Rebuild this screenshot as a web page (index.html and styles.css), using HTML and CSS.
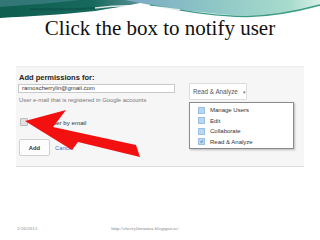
FILE: index.html
```html
<!DOCTYPE html>
<html>
<head>
<meta charset="utf-8">
<link rel="stylesheet" href="styles.css">
</head>
<body>
<div class="slide">
  <svg class="swoosh" width="320" height="20" viewBox="0 0 320 20">
    <defs>
      <linearGradient id="gl" x1="0" y1="0" x2="1" y2="0">
        <stop offset="0" stop-color="#0e5d4f"/>
        <stop offset="0.6" stop-color="#17695d"/>
        <stop offset="1" stop-color="#6a9fa3"/>
      </linearGradient>
      <linearGradient id="gr" x1="0" y1="0" x2="1" y2="0">
        <stop offset="0" stop-color="#7aa9c4"/>
        <stop offset="0.45" stop-color="#8ec6c6"/>
        <stop offset="0.85" stop-color="#a9dccd"/>
        <stop offset="1" stop-color="#d8efe6"/>
      </linearGradient>
    </defs>
    <path d="M0 0 H155 C135 4 115 8 95 11 C60 15 30 16 0 18 Z" fill="url(#gl)"/>
    <path d="M0 0 H80 C55 3 25 5 0 7 Z" fill="#4a8790" opacity="0.6"/>
    <path d="M30 9 C60 10 90 9 120 6" fill="none" stroke="#0a4a40" stroke-width="2" opacity="0.5"/>
    <path d="M125 0 H320 V6 C305 10 290 13 270 15 C250 17 225 15 200 12 C180 10 155 6 125 0 Z" fill="url(#gr)"/>
    <path d="M150 5 C180 10 215 17 248 16.5 C275 16 298 11 320 5" fill="none" stroke="#3b9a83" stroke-width="1.3"/>
    <path d="M95 8 C125 4 150 5 180 10" fill="none" stroke="#ffffff" stroke-width="1.6" opacity="0.85"/>
  </svg>
  <h1 class="title">Click the box to notify user</h1>
  <div class="panel">
    <div class="left">
      <div class="heading">Add permissions for:</div>
      <div class="input">ramoscherrylin@gmail.com</div>
      <div class="help">User e-mail that is registered in Google accounts</div>
      <div class="notify"><span class="cb"></span><span>Notify user by email</span></div>
      <div class="actions"><span class="btn">Add</span><span class="cancel">Cancel</span></div>
    </div>
    <div class="right">
      <div class="dropbtn">Read &amp; Analyze <span class="caret">▾</span></div>
      <div class="menu">
        <div class="item"><span class="mcb"></span>Manage Users</div>
        <div class="item"><span class="mcb"></span>Edit</div>
        <div class="item"><span class="mcb"></span>Collaborate</div>
        <div class="item"><span class="mcb checked">✔</span>Read &amp; Analyze</div>
      </div>
    </div>
    <svg class="arrow" width="320" height="240" viewBox="0 0 320 240">
      <polygon points="25,121 66,110 53,127 136,145 140,157 78,142 72,150" fill="#f21010"/>
    </svg>
  </div>
  <div class="footer">
    <span class="date">2/26/2013</span>
    <span class="url">http://cherrylinramos.blogspot.ae/</span>
  </div>
</div>
</body>
</html>
```
FILE: styles.css
```css
html, body {
  margin: 0;
  padding: 0;
  background: #ffffff;
}
.slide {
  width: 320px;
  height: 240px;
  position: relative;
  overflow: hidden;
  display: flex;
  flex-direction: column;
}
.swoosh {
  display: block;
  flex: none;
}
.title {
  margin: 0;
  font-family: "Liberation Serif", serif;
  font-weight: normal;
  font-size: 21px;
  line-height: 22px;
  color: #111;
  text-align: center;
  height: 22px;
  margin-top: -3px;
}
.panel {
  margin-top: 27px;
  margin-left: 16px;
  width: 288px;
  height: 99px;
  background: #f6f6f6;
  border-top: 1px solid #ececec;
  border-bottom: 1px solid #dedede;
  display: flex;
  font-family: "Liberation Sans", Arial, sans-serif;
  flex: none;
}
.left {
  width: 160px;
  padding-left: 2px;
  display: flex;
  flex-direction: column;
}
.heading {
  font-weight: bold;
  font-size: 7.5px;
  line-height: 8px;
  color: #222;
  margin-top: 7px;
  padding-left: 1px;
}
.input {
  margin-top: 2px;
  width: 152px;
  height: 7px;
  border: 1px solid #c9c9c9;
  background: #fff;
  font-size: 6px;
  line-height: 7px;
  color: #333;
  padding-left: 3px;
}
.help {
  margin-top: 4px;
  font-size: 5.9px;
  line-height: 7px;
  color: #777;
  padding-left: 1px;
}
.notify {
  margin-top: 14px;
  display: flex;
  align-items: center;
  gap: 4px;
  font-size: 6.2px;
  line-height: 7px;
  color: #333;
  padding-left: 2px;
}
.cb {
  width: 6px;
  height: 6px;
  background: #e0e0e0;
  border: 1px solid #bbb;
  border-radius: 1px;
}
.actions {
  margin-top: 13px;
  display: flex;
  align-items: center;
  gap: 5px;
  padding-left: 1px;
}
.btn {
  width: 29px;
  height: 15px;
  border: 1px solid #d0d0d0;
  border-radius: 2px;
  background: #fdfdfd;
  font-size: 5.8px;
  font-weight: bold;
  color: #333;
  display: flex;
  align-items: center;
  justify-content: center;
}
.cancel {
  font-size: 5.8px;
  color: #3a6fd0;
}
.right {
  padding-left: 11px;
  padding-top: 16px;
  display: flex;
  flex-direction: column;
}
.dropbtn {
  width: 58px;
  height: 17px;
  border: 1px solid #dcdcdc;
  border-radius: 1px;
  background: #fff;
  font-size: 6.3px;
  color: #555;
  display: flex;
  align-items: center;
  padding-left: 3px;
  box-sizing: border-box;
  gap: 5px;
}
.caret {
  font-size: 5px;
  color: #777;
}
.menu {
  margin-top: 2px;
  width: 105px;
  height: 47px;
  box-sizing: border-box;
  border: 1px solid #8a8a8a;
  background: #fff;
  box-shadow: 1px 1px 2px rgba(0,0,0,0.25);
  padding-top: 2px;
  padding-left: 8px;
}
.item {
  display: flex;
  align-items: center;
  gap: 5px;
  height: 10.5px;
  font-size: 6px;
  color: #333;
}
.mcb {
  width: 5px;
  height: 5px;
  background: #b8d6f0;
  border: 1px solid #9cc0e4;
  font-size: 4px;
  line-height: 5px;
  color: #2a5ea8;
  text-align: center;
}
.arrow {
  position: absolute;
  left: 0;
  top: 0;
  pointer-events: none;
}
.footer {
  margin-top: auto;
  margin-bottom: 8px;
  display: flex;
  font-family: "Liberation Serif", serif;
  font-size: 5px;
  color: #888;
  line-height: 6px;
  padding-left: 17px;
}
.url {
  margin-left: 74px;
}
```
